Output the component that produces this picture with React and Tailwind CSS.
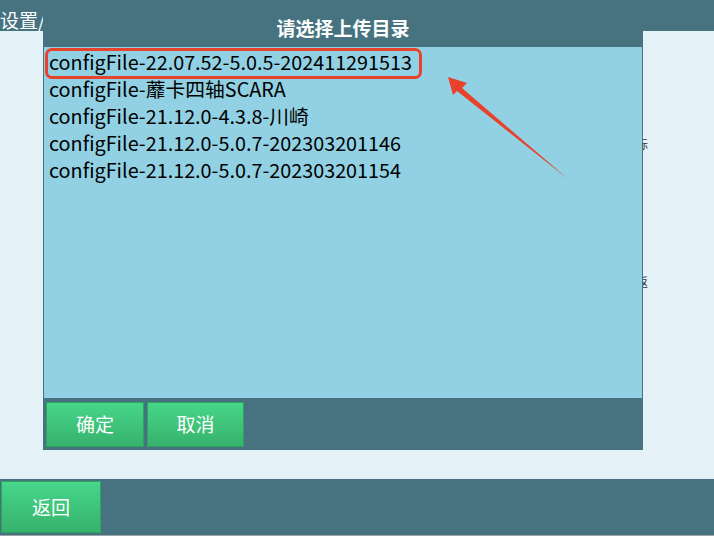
const font = { fontFamily: '"Noto Sans CJK SC", "Noto Sans", sans-serif' }

const files = [
  'configFile-22.07.52-5.0.5-202411291513',
  'configFile-蘼卡四轴SCARA',
  'configFile-21.12.0-4.3.8-川崎',
  'configFile-21.12.0-5.0.7-202303201146',
  'configFile-21.12.0-5.0.7-202303201154',
]

const GreenButton = ({ children, className = '' }) => (
  <button
    className={`flex items-center justify-center bg-gradient-to-b from-[#46d68b] to-[#37b26c] border border-[#2fa45f] text-white text-[19px] ${className}`}
  >
    {children}
  </button>
)

export default function App() {
  return (
    <div className="relative w-[714px] h-[536px] overflow-hidden flex flex-col bg-[#e4f2f8] text-black" style={font}>
      <div className="h-[31px] bg-[#46737f] text-white text-[19px] leading-[40px]">设置/</div>

      <div className="relative flex-1">
        <span className="absolute left-[636px] top-[104px] text-[12px] text-[#333]">标</span>
        <span className="absolute left-[636px] top-[242px] text-[12px] text-[#333]">返</span>
      </div>

      <div className="h-[57px] bg-[#46737f] border-b border-[#9aa6ab] flex items-start pt-[2px] pl-[1px]">
        <GreenButton className="w-[100px] h-[52px]">返回</GreenButton>
      </div>

      {/* dialog */}
      <div className="absolute left-[43px] top-0 w-[600px] h-[450px] bg-[#46737f] flex flex-col">
        <div className="h-[47px] flex items-end justify-center pb-[5px] text-white text-[19px] font-bold">
          请选择上传目录
        </div>
        <div className="relative mx-[1px] h-[351px] bg-[#92d1e3] pt-[1px] pl-[5px]">
          {files.map((f, i) => (
            <div key={i} className="h-[27px] leading-[27px] text-[19.8px] whitespace-nowrap">{f}</div>
          ))}
          <div className="absolute left-[1px] top-[1px] w-[377px] h-[31px] border-[3px] border-[#e8412c] rounded-[7px]" />
        </div>
        <div className="flex gap-[3px] pt-[4px] pl-[3px]">
          <GreenButton className="w-[98px] h-[45px]">确定</GreenButton>
          <GreenButton className="w-[97px] h-[45px]">取消</GreenButton>
        </div>
      </div>

      {/* arrow */}
      <svg className="absolute left-0 top-0 pointer-events-none" width="714" height="536">
        <polygon points="448,77 467,83 462,88 568,179 457,91 453,95" fill="#e8412c" />
      </svg>
    </div>
  )
}
